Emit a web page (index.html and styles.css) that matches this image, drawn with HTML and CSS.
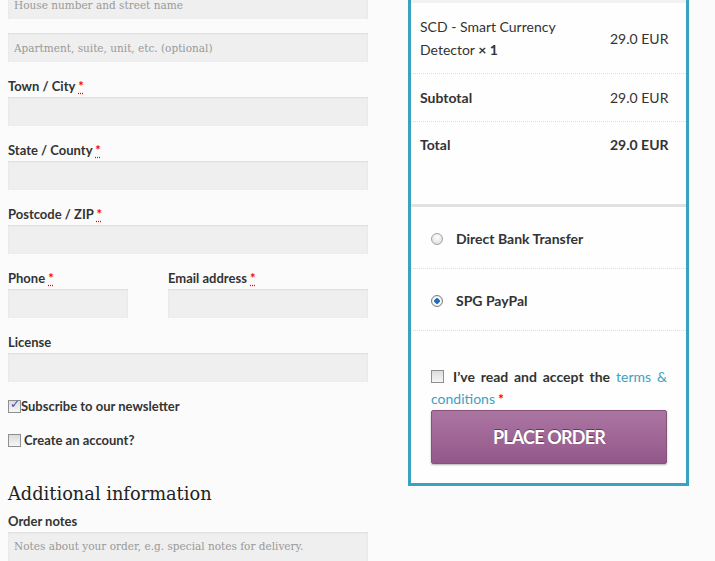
FILE: index.html
```html
<!DOCTYPE html>
<html lang="en">
<head>
    <meta charset="UTF-8">
    <title>Checkout</title>
    <meta name="viewport" content="width=device-width, initial-scale=1.0">
    <link rel="stylesheet" href="styles.css">
</head>
<body>
<div class="page">
    <form class="billing">
        <input type="text" class="field" placeholder="House number and street name" />
        <input type="text" class="field spaced" placeholder="Apartment, suite, unit, etc. (optional)" />

        <label>Town / City <abbr>*</abbr></label>
        <input type="text" class="field" />

        <label>State / County <abbr>*</abbr></label>
        <input type="text" class="field" />

        <label>Postcode / ZIP <abbr>*</abbr></label>
        <input type="text" class="field" />

        <div class="pair">
            <div>
                <label>Phone <abbr>*</abbr></label>
                <input type="text" class="field short" />
            </div>
            <div>
                <label>Email address <abbr>*</abbr></label>
                <input type="text" class="field" />
            </div>
        </div>

        <label>License</label>
        <input type="text" class="field" />

        <div class="check tight"><input type="checkbox" checked /><span>Subscribe to our newsletter</span></div>
        <div class="check"><input type="checkbox" /><span>Create an account?</span></div>

        <h3>Additional information</h3>
        <label class="notes-label">Order notes</label>
        <textarea class="field notes" placeholder="Notes about your order, e.g. special notes for delivery."></textarea>
    </form>

    <div class="order">
        <div class="head"></div>
        <div class="row item">
            <span>SCD - Smart Currency Detector <b>&times; 1</b></span>
            <span>29.0 EUR</span>
        </div>
        <div class="row item"><b>Subtotal</b><span>29.0 EUR</span></div>
        <div class="row total"><b>Total</b><b>29.0 EUR</b></div>

        <div class="payment">
            <ul class="methods">
                <li><input type="radio" name="pay" /><span>Direct Bank Transfer</span></li>
                <li><input type="radio" name="pay" checked /><span>SPG PayPal</span></li>
            </ul>
            <p class="terms"><input type="checkbox" /> <b>I&rsquo;ve read and accept the</b> <a href="#">terms &amp; conditions</a><abbr>*</abbr></p>
            <button type="button">PLACE ORDER</button>
        </div>
    </div>
</div>
</body>
</html>
```

FILE: styles.css
```css
body { margin: 0; background: #fbfbfb; color: #333; font-family: Lato, "Open Sans", sans-serif; overflow: hidden; }
.page { display: flex; align-items: flex-start; gap: 40px; padding: 0 8px; }

.billing { width: 360px; margin-top: -10px; display: flex; flex-direction: column; }
.field { display: block; width: 100%; box-sizing: border-box; height: 29px; margin: 0; padding: 0 6px; border: none; background: #efefef; box-shadow: inset 0 1px 2px rgba(0,0,0,0.08); font-family: "DejaVu Serif", serif; font-size: 10.5px; color: #333; }
.field::placeholder { color: #999; }
.field.spaced { margin-top: 14px; }
.field.short { width: 120px; }
.field.notes { height: 60px; padding-top: 8px; resize: none; }
label { display: block; margin-top: 14px; line-height: 21px; font-size: 13px; font-weight: 700; }
abbr { color: #f00; text-decoration: underline dotted; text-underline-offset: 2px; font-weight: 700; }
.pair { display: grid; grid-template-columns: 160px 1fr; }

.check { display: flex; align-items: center; gap: 3px; margin-top: 14px; line-height: 20px; font-size: 13px; font-weight: 700; }
.check.tight { gap: 0; }
input[type=checkbox] { appearance: none; width: 13px; height: 13px; margin: 0; border: 1px solid #8e8f8f; box-sizing: border-box; background: linear-gradient(#dcdcdc, #f6f6f6); position: relative; }
input[type=checkbox]:checked::after { content: "\2713"; position: absolute; left: 1px; top: -4px; font-size: 12px; color: #3b4fa6; font-family: "DejaVu Sans", sans-serif; }

h3 { margin: 31px 0 0; font-family: "DejaVu Serif", serif; font-weight: 400; font-size: 17.8px; line-height: 26px; color: #222; }
.notes-label { margin-top: 4px; }

.order { width: 281px; box-sizing: border-box; margin-top: -60px; border: 3px solid #3aa2c1; background: #fefefe; font-size: 14px; }
.row { display: grid; grid-template-columns: 190px 1fr; line-height: 23px; }
.row > * { padding: 0 9px; }
.head { height: 57px; border-bottom: 3px solid #f2f2f2; }
.item { padding: 12px 0; border-bottom: 1px dotted #ddd; align-items: center; }
.total { padding: 11px 0 48px; }
b { font-weight: 700; }

.payment { border-top: 3px solid #e1e1e1; padding-bottom: 19px; }
.methods { list-style: none; margin: 0; padding: 0; }
.methods li { display: flex; align-items: center; gap: 13px; padding: 20px 20px 18px; line-height: 23px; border-bottom: 1px dotted #ddd; font-weight: 700; }
input[type=radio] { appearance: none; width: 12px; height: 12px; margin: 0; border-radius: 50%; border: 1px solid #a3a3a3; box-sizing: border-box; background: radial-gradient(circle at 50% 35%, #fff, #d6d6d6); }
input[type=radio]:checked { background: radial-gradient(circle, #1d6fb8 0 2.5px, #fff 3px, #d4d4d4); border-color: #7d7d7d; }

.terms { margin: 35px 19px 0 20px; line-height: 22px; text-align: justify; }
.terms input { vertical-align: -1px; margin-right: 3px; }
.terms a { color: #3aa2c1; text-decoration: none; }
.terms abbr { margin-left: 3px; text-decoration: none; }

button { display: block; width: 236px; height: 54px; margin: 0 0 0 20px; border: 1px solid #86517b; border-radius: 2px; background: linear-gradient(#ab75a1, #93588a); box-shadow: 0 1px 2px rgba(0,0,0,0.3); color: #fff; font-family: Lato, sans-serif; font-size: 18px; font-weight: 700; letter-spacing: -0.8px; text-shadow: 0 -1px 0 rgba(0,0,0,0.45); }
```
